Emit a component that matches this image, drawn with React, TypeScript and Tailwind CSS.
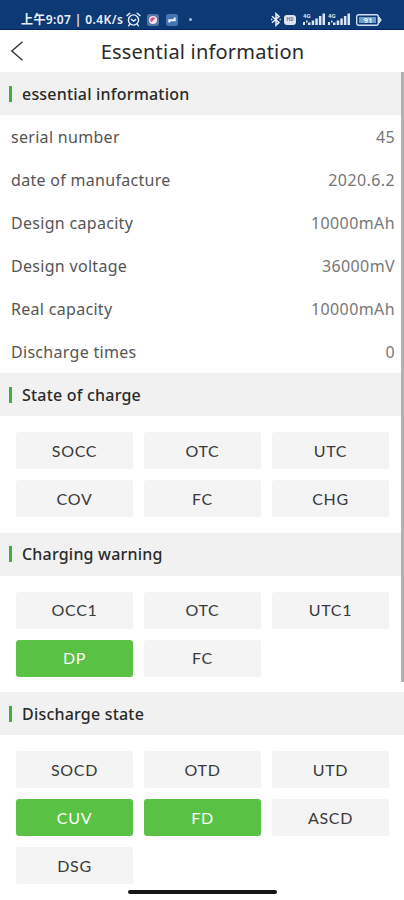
type State = {
  label: string
  active?: boolean
}

const info = [
  { label: 'serial number', value: '45' },
  { label: 'date of manufacture', value: '2020.6.2' },
  { label: 'Design capacity', value: '10000mAh' },
  { label: 'Design voltage', value: '36000mV' },
  { label: 'Real capacity', value: '10000mAh' },
  { label: 'Discharge times', value: '0' },
]

const chargeStates: State[] = [
  { label: 'SOCC' },
  { label: 'OTC' },
  { label: 'UTC' },
  { label: 'COV' },
  { label: 'FC' },
  { label: 'CHG' },
]

const chargeWarnings: State[] = [
  { label: 'OCC1' },
  { label: 'OTC' },
  { label: 'UTC1' },
  { label: 'DP', active: true },
  { label: 'FC' },
]

const dischargeStates: State[] = [
  { label: 'SOCD' },
  { label: 'OTD' },
  { label: 'UTD' },
  { label: 'CUV', active: true },
  { label: 'FD', active: true },
  { label: 'ASCD' },
  { label: 'DSG' },
]

const Signal = () => (
  <svg width="25" height="15" viewBox="0 0 25 15" fill="#dbe6f5">
    <text x="1" y="5.5" fontSize="6" fontWeight="700" fontFamily="Roboto, sans-serif">4G</text>
    <rect x="1" y="10" width="2" height="3" />
    <rect x="4" y="8.5" width="1.5" height="2" />
    <rect x="6" y="10.5" width="2.5" height="2.5" />
    <rect x="9.7" y="8.5" width="2.5" height="4.5" />
    <rect x="13.3" y="6.5" width="2.5" height="6.5" />
    <rect x="16.9" y="4" width="2.5" height="9" />
    <rect x="20.5" y="1.5" width="2.5" height="11.5" />
  </svg>
)

const StatusBar = () => {
  return (
    <div className="flex h-[30px] items-center justify-between border-b border-[#06246a] bg-[#0d3974] pt-[10px] pl-[21px] pr-[22px] text-[#e9f0fa]">
      <div className="flex items-center">
        <span className="w-[103px] whitespace-nowrap font-['Noto_Sans','Noto_Sans_CJK_SC',sans-serif] text-[12px] leading-5 font-semibold tracking-[0.4px]">上午9:07 | 0.4K/s</span>
        <svg className="ml-[2px]" width="15" height="15" viewBox="0 0 15 15" fill="none" stroke="currentColor" strokeWidth="1.4" strokeLinecap="round">
          <circle cx="7.5" cy="8" r="5.1" />
          <path d="M1 3.6 3.8 1.3M14 3.6 11.2 1.3M3.8 12.2 2.6 13.8M11.2 12.2 12.4 13.8" />
          <path d="M5.3 7.2 7.5 9.2 9.6 7.6" />
        </svg>
        <svg className="ml-[6px]" width="12" height="12" viewBox="0 0 12 12">
          <rect width="12" height="12" rx="2.5" fill="#5774a7" />
          <circle cx="6" cy="6" r="4" fill="#f3e9f2" />
          <path d="M3.2 5.8a2.8 2.8 0 0 1 5-1.5L4.5 8.2a2.8 2.8 0 0 1-1.3-2.4Z" fill="#d9547c" />
        </svg>
        <svg className="ml-[7px]" width="12" height="12" viewBox="0 0 12 12">
          <rect width="12" height="12" rx="2.5" fill="#4474b4" />
          <path d="M3.3 8.6V6.2h3.2M5.8 6.2h2.9V3.6" fill="none" stroke="#f0f5fb" strokeWidth="2" />
        </svg>
        <span className="ml-[11px] h-[3px] w-[3px] rounded-full bg-[#a5bde0]"></span>
      </div>
      <div className="flex items-center">
        <svg width="12" height="15" viewBox="0 0 12 15" fill="none" stroke="currentColor" strokeWidth="1.5">
          <path d="M2 4.3 9 10.4 6 13.2V1.8L9 4.6 2 10.7" />
          <path d="M1 7.5h1.3M9.5 7.5h1.3" />
        </svg>
        <span className="ml-[2px] flex h-[10px] w-[12px] items-center justify-center rounded-[3px] bg-[#dbe6f5] font-['Roboto',sans-serif] text-[5px] font-bold text-[#5272a5]">HD</span>
        <span className="ml-[6px]"><Signal /></span>
        <Signal />
        <svg className="ml-[4px]" width="26" height="12" viewBox="0 0 26 12" fill="none" stroke="#cfdef2">
          <rect x="0.7" y="0.7" width="21.6" height="10.6" rx="2" strokeWidth="1.4" />
          <path d="M23 2.8 25.3 6 23 9.2Z" fill="#cfdef2" />
          <rect x="3" y="3" width="17" height="6" fill="#6f9bcd" stroke="none" />
          <text x="7.5" y="9" fontSize="8" fontWeight="700" fontFamily="Roboto, sans-serif" fill="#eff5fd" stroke="none">91</text>
        </svg>
      </div>
    </div>
  )
}

const SectionTitle = ({ title }: { title: string }) => {
  return (
    <div className="flex h-[43px] items-center bg-[#f1f1f1] pl-[9px]">
      <span className="h-4 w-[3px] bg-[#3fb03c]"></span>
      <h2 className="ml-[10px] text-[16px] font-medium tracking-[0.2px] text-[#2a2a2a]">{title}</h2>
    </div>
  )
}

const StateGrid = ({ states }: { states: State[] }) => {
  return (
    <div className="grid grid-cols-3 gap-[11px] pt-4 pr-[15px] pb-[15.5px] pl-4 font-['Lato',sans-serif] text-[16px] tracking-[0.7px]">
      {states.map(({ label, active }) => (
        <button
          key={label}
          className={
            active
              ? 'h-[37px] rounded-[3px] bg-[#59c143] text-white'
              : 'h-[37px] rounded-[3px] bg-[#f4f4f4] text-[#3a3a3a]'
          }
        >
          {label}
        </button>
      ))}
    </div>
  )
}

const App = () => {
  return (
    <div className="relative h-[900px] w-[404px] overflow-hidden bg-white font-['Noto_Sans',sans-serif]">
      <StatusBar />
      <header className="flex h-[42px] items-center">
        <button className="ml-[10px]">
          <svg width="14" height="20" viewBox="0 0 14 20" fill="none" stroke="#333" strokeWidth="1.4">
            <path d="M12.5 0.8 1.8 10 12.5 19.2" />
          </svg>
        </button>
        <h1 className="flex-1 pt-px pl-px pr-[24px] text-center text-[20px] tracking-[0.2px] text-[#2a2a2a]">Essential information</h1>
      </header>
      <SectionTitle title="essential information" />
      {info.map(({ label, value }) => (
        <div key={label} className="flex h-[43px] items-center justify-between pr-[9px] pl-[11px] text-[16px]">
          <span className="tracking-[0.3px] text-[#555]">{label}</span>
          <span className="tracking-[0.4px] text-[#777]">{value}</span>
        </div>
      ))}
      <SectionTitle title="State of charge" />
      <StateGrid states={chargeStates} />
      <SectionTitle title="Charging warning" />
      <StateGrid states={chargeWarnings} />
      <SectionTitle title="Discharge state" />
      <StateGrid states={dischargeStates} />
      {/* scrollbar */}
      <div className="absolute top-[72px] right-0 h-[610px] w-[3px] bg-[#b0b0b0]"></div>
      {/* home indicator */}
      <div className="absolute top-[890px] left-[128px] h-[4px] w-[149px] rounded-full bg-[#161616]"></div>
    </div>
  )
}

export default App
